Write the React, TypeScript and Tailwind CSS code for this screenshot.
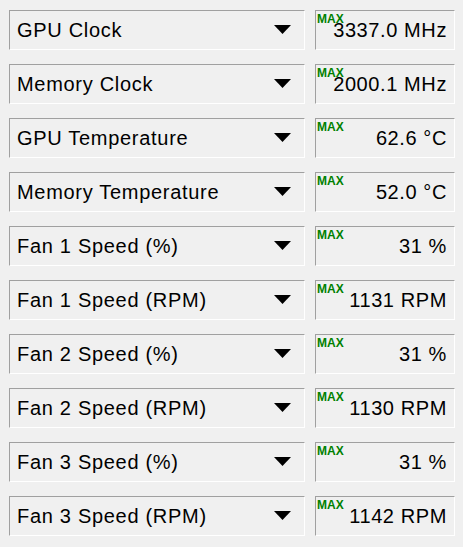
const rows = [
  { label: "GPU Clock", value: "3337.0 MHz" },
  { label: "Memory Clock", value: "2000.1 MHz" },
  { label: "GPU Temperature", value: "62.6 °C" },
  { label: "Memory Temperature", value: "52.0 °C" },
  { label: "Fan 1 Speed (%)", value: "31 %" },
  { label: "Fan 1 Speed (RPM)", value: "1131 RPM" },
  { label: "Fan 2 Speed (%)", value: "31 %" },
  { label: "Fan 2 Speed (RPM)", value: "1130 RPM" },
  { label: "Fan 3 Speed (%)", value: "31 %" },
  { label: "Fan 3 Speed (RPM)", value: "1142 RPM" },
];

const SensorRow = ({ label, value }: { label: string; value: string }) => {
  return (
    <div className="flex gap-[10px]">
      {/* Sensor selector */}
      <div className="flex items-center w-[296px] h-[40px] border border-t-[#a0a0a0] border-l-[#a0a0a0] border-b-white border-r-white pl-[7px] pr-[13px]">
        <span className="flex-1 text-[20px] tracking-[0.7px] text-black leading-none">{label}</span>
        <svg width="17" height="9" viewBox="0 0 17 9" className="mb-[1px]">
          <polygon points="0,0 17,0 8.5,9" fill="#000" />
        </svg>
      </div>

      {/* Value */}
      <div className="relative flex items-center justify-end w-[140px] h-[40px] border border-t-[#a0a0a0] border-l-[#a0a0a0] border-b-white border-r-white pr-[7px]">
        <span className="absolute left-[1px] top-[2px] text-[12px] font-bold leading-none text-[#008000]">
          MAX
        </span>
        <span className="text-[20px] tracking-[0.6px] text-black leading-none">{value}</span>
      </div>
    </div>
  );
};

export default function App() {
  return (
    <div
      className="w-[463px] h-[547px] bg-[#f0f0f0] pt-[10px] pl-[9px] flex flex-col gap-[14px]"
      style={{ fontFamily: '"Liberation Sans", Arial, sans-serif' }}
    >
      {rows.map((r) => (
        <SensorRow key={r.label} label={r.label} value={r.value} />
      ))}
    </div>
  );
}
